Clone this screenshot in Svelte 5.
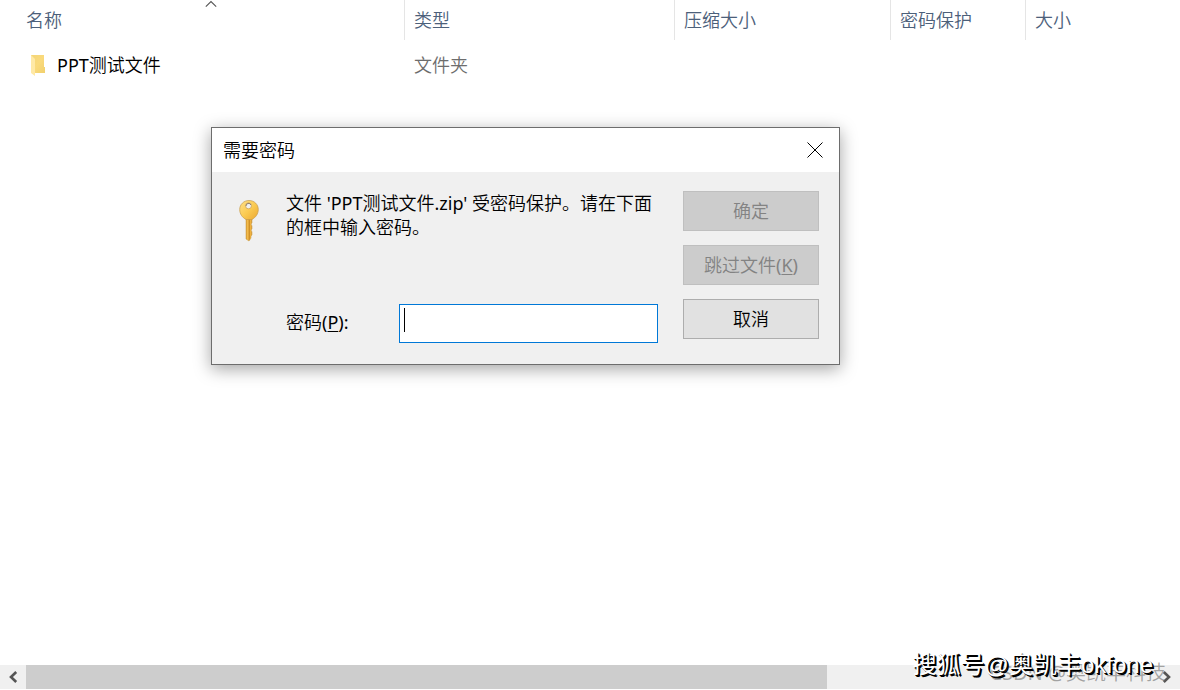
<script>
  const columns = ['名称', '类型', '压缩大小', '密码保护', '大小'];
  const files = [{ name: 'PPT测试文件', type: '文件夹' }];
  let password = $state('');
</script>

<main class="window">
  <table class="files">
    <colgroup>
      <col class="c-name" />
      <col class="c-type" />
      <col class="c-packed" />
      <col class="c-lock" />
      <col />
    </colgroup>
    <thead>
      <tr>
        {#each columns as column, i}
          <th scope="col" aria-sort={i === 0 ? 'ascending' : undefined}>
            {column}
            {#if i === 0}
              <svg class="sort" width="12" height="8" viewBox="0 0 12 8" aria-hidden="true">
                <path d="M.8 6.700 6 1.500l5.200 5.200" fill="none" stroke="#555" stroke-width="1.1" />
              </svg>
            {/if}
          </th>
        {/each}
      </tr>
    </thead>
    <tbody>
      {#each files as file}
        <tr>
          <td>
            <span class="file">
              <svg width="16" height="22" viewBox="0 0 16 22" aria-hidden="true">
                <defs>
                  <linearGradient id="folder-back" x1="0" y1="0" x2="1" y2="1">
                    <stop offset="0" stop-color="#f3d578" />
                    <stop offset=".5" stop-color="#fada7c" />
                    <stop offset="1" stop-color="#f1d06d" />
                  </linearGradient>
                </defs>
                <path d="M1 1h13v12h1v6H5L1 18Z" fill="url(#folder-back)" />
                <path d="M1 1 5 5v17l-4-3Z" fill="#ffe9a6" />
              </svg>
              <span>{file.name}</span>
            </span>
          </td>
          <td class="kind">{file.type}</td>
          <td></td>
          <td></td>
          <td></td>
        </tr>
      {/each}
    </tbody>
  </table>

  <footer class="scrollbar">
    <button class="arrow" aria-label="向左滚动">
      <svg width="10" height="12" viewBox="0 0 10 12" aria-hidden="true">
        <path d="M8.200 1 3 6l5.200 5" fill="none" stroke="#555" stroke-width="2.600" />
      </svg>
    </button>
    <div class="track"><div class="thumb"></div></div>
    <button class="arrow" aria-label="向右滚动">
      <svg width="10" height="12" viewBox="0 0 10 12" aria-hidden="true">
        <path d="M1.800 1 7 6l-5.200 5" fill="none" stroke="#555" stroke-width="2.600" />
      </svg>
    </button>
  </footer>

  <div class="dialog" role="dialog" aria-labelledby="dialog-title">
    <header>
      <h1 id="dialog-title">需要密码</h1>
      <button class="close" aria-label="关闭">
        <svg width="16" height="16" viewBox="0 0 16 16" aria-hidden="true">
          <path d="m.5.5 15 15m0-15-15 15" stroke="#000" stroke-width="1" />
        </svg>
      </button>
    </header>
    <form onsubmit={(event) => event.preventDefault()}>
      <svg class="key" width="22" height="44" viewBox="0 0 22 44" aria-hidden="true">
        <defs>
          <linearGradient id="key-head" x1="0" y1="0" x2="1" y2="1">
            <stop offset="0" stop-color="#ffe08a" />
            <stop offset=".5" stop-color="#fbcb52" />
            <stop offset="1" stop-color="#eba832" />
          </linearGradient>
          <linearGradient id="key-stem" x1="0" y1="0" x2="1" y2="0">
            <stop offset="0" stop-color="#d89a30" />
            <stop offset=".3" stop-color="#f8c150" />
            <stop offset=".55" stop-color="#c98a22" />
            <stop offset=".75" stop-color="#f0b23f" />
            <stop offset="1" stop-color="#d09a43" />
          </linearGradient>
        </defs>
        <path d="M8 19h6v5l-1 1 1 2v3l-1 1 1 2v3l-1 1v2l-2 3-3-2Z" fill="url(#key-stem)" stroke="#c9993f" stroke-width=".5" />
        <path
          fill-rule="evenodd"
          d="M11 1.500c5.300 0 9.300 4 9.300 9 0 4.600-2.800 8-6.300 10H8c-3.600-2-6.300-5.400-6.300-10 0-5 4-9 9.300-9Zm-.5 2.300a3 3 0 1 0 0 6 3 3 0 0 0 0-6Z"
          fill="url(#key-head)"
          stroke="#c69b4a"
          stroke-width=".7"
        />
        <path d="M8 7a2.600 2.600 0 0 1 5-1" fill="none" stroke="#8e7b65" stroke-width="1" />
      </svg>
      <p>文件 'PPT测试文件.zip' 受密码保护。请在下面的框中输入密码。</p>
      <label for="password">密码(<u>P</u>):</label>
      <div class="field">
        <input id="password" type="password" bind:value={password} />
        <span class="caret"></span>
      </div>
      <div class="actions">
        <button type="submit" disabled>确定</button>
        <button type="button" disabled>跳过文件(<u>K</u>)</button>
        <button type="button">取消</button>
      </div>
    </form>
  </div>

  <span class="mark faint">CSDN @奥凯丰科技</span>
  <span class="mark strong">搜狐号@奥凯丰okfone</span>
</main>

<style>
  :global(body) {
    margin: 0;
    background: #fff;
  }

  .window {
    position: relative;
    display: flex;
    flex-direction: column;
    box-sizing: border-box;
    min-height: 100vh;
    padding-bottom: 1px;
    overflow: hidden;
    color: #000;
    font: 18px/24px 'Noto Sans', 'Noto Sans CJK SC DemiLight', 'Noto Sans CJK SC', sans-serif;
    font-weight: 400;
  }

  button,
  input {
    font: inherit;
    color: inherit;
  }

  .files {
    width: 100%;
    table-layout: fixed;
    border-collapse: separate;
    border-spacing: 0;
  }

  .c-name { width: 405px; }
  .c-type { width: 270px; }
  .c-packed { width: 216px; }
  .c-lock { width: 135px; }

  th,
  td {
    box-sizing: border-box;
    height: 40px;
    padding: 0 9px;
    text-align: left;
    font-weight: inherit;
    white-space: nowrap;
  }

  th {
    position: relative;
    border-right: 1px solid #e5e5e5;
    color: #4c607a;
  }

  th:last-child {
    border-right: 0;
  }

  th:first-child {
    padding-left: 26px;
  }

  td {
    height: 50px;
  }

  td:first-child {
    padding-left: 30px;
  }

  .kind {
    color: #6d6d6d;
  }

  .sort {
    position: absolute;
    top: 0;
    left: 205px;
  }

  .file {
    display: flex;
    align-items: center;
    gap: 11px;
  }

  .scrollbar {
    display: flex;
    height: 24px;
    margin-top: auto;
    background: #f0f0f0;
  }

  .arrow {
    display: grid;
    place-items: center;
    width: 26px;
    padding: 0;
    border: 0;
    background: none;
  }

  .track {
    flex: 1;
  }

  .thumb {
    width: 71%;
    height: 100%;
    background: #cdcdcd;
  }

  .dialog {
    position: absolute;
    top: 127px;
    left: 211px;
    box-sizing: border-box;
    width: 629px;
    border: 1px solid #6d6d6d;
    background: #f0f0f0;
    box-shadow: 0 4px 16px rgba(0, 0, 0, 0.36);
  }

  header {
    display: flex;
    align-items: center;
    justify-content: space-between;
    height: 44px;
    padding: 0 10px 0 11px;
    background: #fff;
  }

  h1 {
    margin: 0;
    font: inherit;
  }

  .close {
    display: grid;
    place-items: center;
    width: 28px;
    height: 28px;
    padding: 0;
    border: 0;
    background: none;
  }

  form {
    display: grid;
    grid-template-columns: 48px 113px 1fr 136px;
    grid-template-rows: 1fr 39px;
    padding: 19px 20px 21px 26px;
  }

  .key {
    margin-top: 8px;
  }

  p {
    grid-column: 2 / 4;
    margin: 0 20px 0 0;
  }

  label {
    grid-area: 2 / 2;
    padding-top: 6px;
  }

  .field {
    position: relative;
    grid-area: 2 / 3;
    margin-right: 25px;
  }

  input {
    box-sizing: border-box;
    width: 100%;
    height: 39px;
    padding: 4px;
    border: 1px solid #0078d7;
    background: #fff;
    outline: none;
  }

  .caret {
    position: absolute;
    top: 4px;
    left: 5px;
    width: 1px;
    height: 24px;
    background: #000;
  }

  .actions {
    grid-area: 1 / 4 / 3 / 5;
    display: flex;
    flex-direction: column;
    gap: 14px;
    padding-bottom: 4px;
  }

  .actions button {
    height: 40px;
    padding: 0;
    border: 1px solid #adadad;
    background: #e1e1e1;
  }

  .actions button:disabled {
    border-color: #bfbfbf;
    background: #ccc;
    color: #838383;
  }

  u {
    text-decoration-thickness: 1px;
    text-underline-offset: 2px;
  }

  .mark {
    position: absolute;
    white-space: nowrap;
    pointer-events: none;
  }

  .faint {
    right: 14px;
    bottom: 5px;
    color: rgba(110, 110, 110, 0.6);
    font-size: 20px;
  }

  .strong {
    right: 27px;
    bottom: 12px;
    color: #fff;
    font: 24px/26px 'Liberation Sans', 'Noto Sans CJK SC', sans-serif;
    text-shadow: 1px 1px 0 #000, 2px 2px 0 #000;
  }
</style>
